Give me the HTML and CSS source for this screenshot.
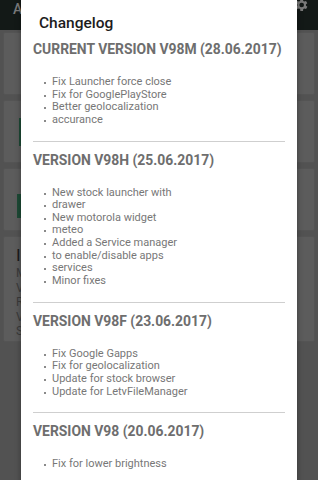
FILE: index.html
```html
<!DOCTYPE html>
<html>
  <head>
    <title>Changelog</title>
    <link rel="stylesheet" href="styles.css">
  </head>
  <body>
    <div class="screen">
      <div class="toolbar">
        <span class="toolbar-title">A</span>
        <svg class="cog" viewBox="0 0 24 24" width="16" height="16">
          <path d="M19.4 13a7.5 7.5 0 0 0 0-2l2.1-1.6-2-3.5-2.5 1a7 7 0 0 0-1.7-1L15 3h-4l-.4 2.9a7 7 0 0 0-1.7 1l-2.5-1-2 3.5L6.6 11a7.5 7.5 0 0 0 0 2l-2.1 1.6 2 3.5 2.5-1a7 7 0 0 0 1.7 1L11 21h4l.4-2.9a7 7 0 0 0 1.7-1l2.5 1 2-3.5zM13 15.5a3.5 3.5 0 1 1 0-7 3.5 3.5 0 0 1 0 7z" fill="#7a7a7a"/>
        </svg>
      </div>
      <div class="card card-short"></div>
      <div class="card card-short"><div class="green-btn btn-a"></div></div>
      <div class="card card-short"><div class="green-btn btn-b"></div></div>
      <div class="card card-info">
        <div class="info-title">Info</div>
        <div class="info-line">Model</div>
        <div class="info-line">Version</div>
        <div class="info-line">ROM</div>
        <div class="info-line">Vendor</div>
        <div class="info-line">SDK</div>
      </div>
    </div>

    <div class="dialog">
      <div class="dialog-title">Changelog</div>
      <div class="changelog">
        <div class="release">
          <div class="release-head">CURRENT VERSION V98M (28.06.2017)</div>
          <ul class="changes">
            <li>Fix Launcher force close</li>
            <li>Fix for GooglePlayStore</li>
            <li>Better geolocalization</li>
            <li>accurance</li>
          </ul>
        </div>
        <div class="release">
          <div class="release-head">VERSION V98H (25.06.2017)</div>
          <ul class="changes">
            <li>New stock launcher with</li>
            <li>drawer</li>
            <li>New motorola widget</li>
            <li>meteo</li>
            <li>Added a Service manager</li>
            <li>to enable/disable apps</li>
            <li>services</li>
            <li>Minor fixes</li>
          </ul>
        </div>
        <div class="release">
          <div class="release-head">VERSION V98F (23.06.2017)</div>
          <ul class="changes">
            <li>Fix Google Gapps</li>
            <li>Fix for geolocalization</li>
            <li>Update for stock browser</li>
            <li>Update for LetvFileManager</li>
          </ul>
        </div>
        <div class="release">
          <div class="release-head">VERSION V98 (20.06.2017)</div>
          <ul class="changes">
            <li>Fix for lower brightness</li>
          </ul>
        </div>
      </div>
    </div>
  </body>
</html>
```

FILE: styles.css
```css
body {
  margin: 0;
  width: 318px;
  height: 480px;
  overflow: hidden;
  position: relative;
  font-family: Roboto, "Noto Sans", sans-serif;
  background: #525252;
}

.screen {
  display: flex;
  flex-direction: column;
  gap: 5px;
}

.toolbar {
  height: 30px;
  margin-bottom: -3px;
  background: #131917;
  display: flex;
  justify-content: space-between;
  align-items: flex-start;
  padding: 0 9px 0 13px;
  box-sizing: border-box;
}

.toolbar-title {
  color: #7b7b7b;
  font-size: 14px;
  font-weight: 500;
  line-height: 16px;
  margin-top: 1px;
}

.cog {
  margin-top: -3px;
}

.card {
  margin: 0 3px;
  background: #5c5c5c;
  border: 1px solid #545454;
  border-radius: 2px;
  box-sizing: border-box;
  padding: 0 12px;
}

.card-short {
  height: 63px;
}

.green-btn {
  background: #1d4a35;
}

.btn-a {
  width: 40px;
  height: 28px;
  margin: 17px 0 0 3px;
}

.btn-b {
  width: 40px;
  height: 24px;
  margin: 25px 0 0 1px;
}

.card-info {
  height: 106px;
  padding-top: 8px;
}

.info-title {
  color: #1b1b1b;
  font-size: 17px;
  line-height: 20px;
  margin-bottom: 1px;
}

.info-line {
  color: #3a3a3a;
  font-size: 12px;
  line-height: 14.5px;
}

.dialog {
  position: absolute;
  left: 21px;
  top: -10px;
  width: 276px;
  height: 500px;
  background: #ffffff;
  box-shadow: 0 0 6px rgba(0, 0, 0, 0.35);
  padding-top: 23px;
  box-sizing: border-box;
  overflow: hidden;
}

.dialog-title {
  padding-left: 18px;
  font-size: 15.5px;
  font-weight: 500;
  line-height: 20px;
  color: #1c1c1c;
}

.changelog {
  padding: 6px 12px 0;
}

.release + .release {
  border-top: 1px solid #cfcfcf;
  padding-top: 8px;
}

.release-head {
  font-size: 13.9px;
  font-weight: 700;
  line-height: 20px;
  color: #6e6e6e;
  white-space: nowrap;
}

.changes {
  margin: 17px 0 14.3px;
  padding-left: 19px;
  list-style: none;
}

.changes li {
  position: relative;
  font-size: 11px;
  line-height: 12.6px;
  color: #777777;
}

.changes li::before {
  content: "";
  position: absolute;
  left: -8px;
  top: 6px;
  width: 2px;
  height: 2px;
  background: #8a8a8a;
}
```
